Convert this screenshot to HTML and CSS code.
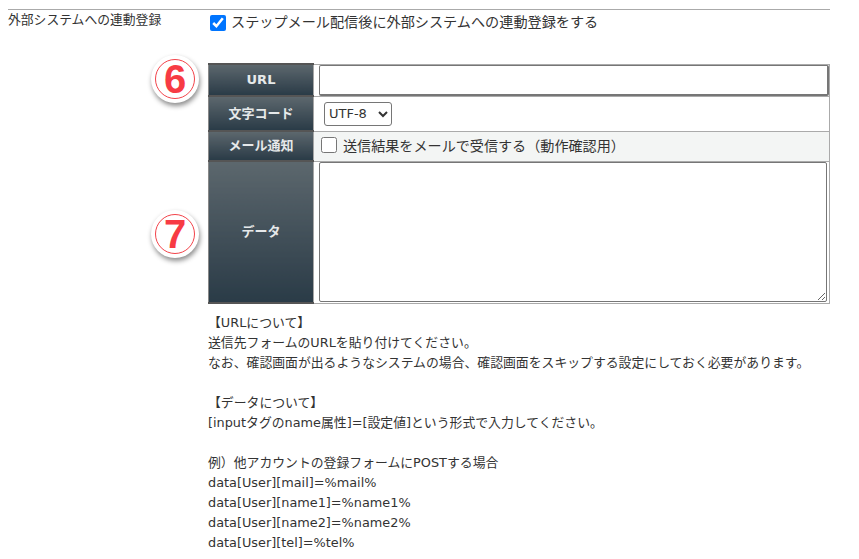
FILE: index.html
```html
<!DOCTYPE html>
<html lang="ja">
<head>
<meta charset="utf-8">
<title>外部システムへの連動登録</title>
<link rel="stylesheet" href="styles.css">
</head>
<body>
<div class="section">
  <div class="label">外部システムへの連動登録</div>
  <div class="content">
    <label class="main-check"><input type="checkbox" checked><span>ステップメール配信後に外部システムへの連動登録をする</span></label>
    <div class="table-wrap">
      <div class="badge badge-six"><span class="ring">6</span></div>
      <div class="badge badge-seven"><span class="ring">7</span></div>
      <table class="form">
        <tr class="row-url">
          <th>URL</th>
          <td class="cell-url"><input class="url" type="text"></td>
        </tr>
        <tr class="row-charset">
          <th>文字コード</th>
          <td class="cell-select"><select class="charset"><option>UTF-8</option></select></td>
        </tr>
        <tr class="row-mail">
          <th>メール通知</th>
          <td class="cell-mail"><label class="mail-check"><input type="checkbox"><span>送信結果をメールで受信する（動作確認用）</span></label></td>
        </tr>
        <tr class="row-data">
          <th>データ</th>
          <td class="cell-data"><textarea class="data"></textarea></td>
        </tr>
      </table>
    </div>
    <div class="notes">
      <p>【URLについて】<br>送信先フォームのURLを貼り付けてください。<br>なお、確認画面が出るようなシステムの場合、確認画面をスキップする設定にしておく必要があります。</p>
      <p>【データについて】<br>[inputタグのname属性]=[設定値]という形式で入力してください。</p>
      <p>例）他アカウントの登録フォームにPOSTする場合<br>data[User][mail]=%mail%<br>data[User][name1]=%name1%<br>data[User][name2]=%name2%<br>data[User][tel]=%tel%</p>
    </div>
  </div>
</div>
</body>
</html>
```

FILE: styles.css
```css
html, body {
  margin: 0;
  padding: 0;
  background: #fff;
  height: 559px;
  overflow: hidden;
}
body {
  font-family: "DejaVu Sans", "Noto Sans CJK JP", "Liberation Sans", sans-serif;
  font-size: 13px;
  color: #333;
}
.section {
  display: flex;
  margin: 9px 29px 0 8px;
  border-top: 1px solid #aaa;
}
.label {
  width: 200px;
  flex: none;
  line-height: 20px;
  font-size: 12.8px;
}
.content {
  flex: 1;
  min-width: 0;
}
.main-check {
  display: flex;
  align-items: center;
  height: 26px;
  font-size: 14.15px;
  line-height: 24px;
  padding-left: 2px;
}
.main-check input {
  width: 16px;
  height: 16px;
  margin: 0 5px 0 0;
  accent-color: #0075ff;
}
.main-check span {
  padding-bottom: 2px;
}
.table-wrap {
  position: relative;
  margin-top: 27px;
}
.form {
  width: 622px;
  table-layout: fixed;
  border-collapse: collapse;
}
.form th {
  width: 105px;
  padding: 0 0 3px;
  box-sizing: border-box;
  color: #e6e9ea;
  font-size: 13px;
  font-weight: bold;
  text-align: center;
  background: linear-gradient(#5c676d, #2a3b47);
  border: 1px solid #888;
  border-top: 2px solid #555;
  border-right-color: #a5a5a5;
}
.form td {
  padding: 0;
  border: 1px solid #aaa;
}
.row-url { height: 32px; }
.row-url th { padding-bottom: 1px; }
.row-charset { height: 35px; }
.row-mail { height: 30px; }
.row-data { height: 142px; }
.row-data th { border-bottom: 2px solid #555; }
.cell-url, .cell-data { padding-left: 5px !important; }
.url {
  display: block;
  box-sizing: border-box;
  width: 100%;
  height: 31px;
  margin: 0;
  border: 1px solid #767676;
  border-width: 1px 2px 2px 1px;
  border-radius: 2px;
  background: #fff;
}
.cell-select { padding-left: 10px !important; }
.charset {
  display: block;
  width: 68px;
  height: 24px;
  font-family: "DejaVu Sans", sans-serif;
  font-size: 13px;
  color: #333;
  background: #fff;
  border: 1px solid #767676;
  border-radius: 3px;
}
.cell-mail { background: #f3f5f4; padding: 0 0 3px 7px !important; }
.mail-check {
  display: flex;
  align-items: center;
  font-size: 14.1px;
}
.mail-check input {
  width: 16px;
  height: 16px;
  margin: 0 6px 0 0;
}
.data {
  display: block;
  box-sizing: border-box;
  width: 508px;
  height: 140px;
  margin: 0;
  border: 1px solid #767676;
  border-radius: 2px;
  background: #fff;
}
.notes {
  margin-top: 9px;
  line-height: 20px;
  font-size: 12.85px;
}
.notes p {
  margin: 0 0 20px;
}
.badge {
  position: absolute;
  left: -57px;
  width: 48px;
  height: 48px;
  box-sizing: border-box;
  padding: 4px;
  border-radius: 50%;
  background: #fff;
  box-shadow: 1px 3px 5px rgba(0, 0, 0, .45);
}
.badge-six { top: -8px; }
.badge-seven { top: 147px; }
.ring {
  display: block;
  box-sizing: border-box;
  height: 40px;
  border: 1px solid #f2434a;
  border-radius: 50%;
  color: #f73b44;
  font-family: "Liberation Sans", sans-serif;
  font-size: 40px;
  font-weight: bold;
  line-height: 38px;
  text-align: center;
}
```
